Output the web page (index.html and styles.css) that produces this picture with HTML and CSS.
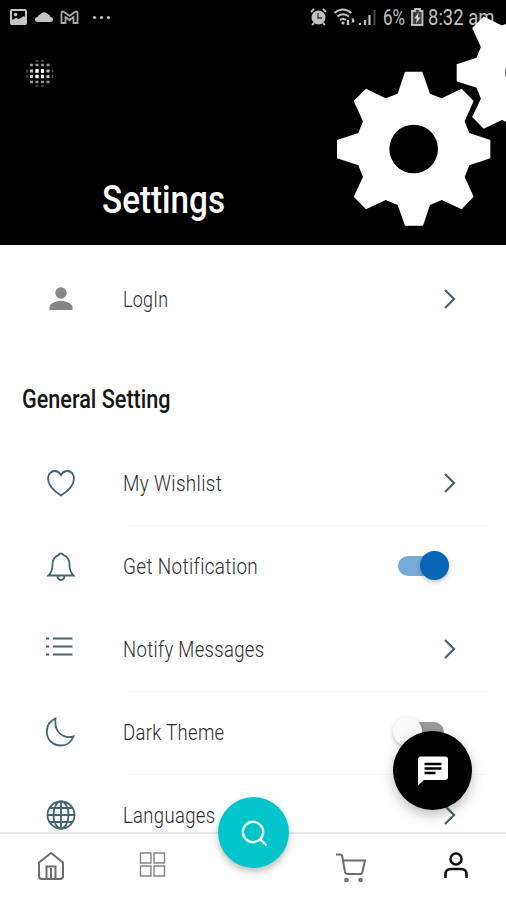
FILE: index.html
```html
<!DOCTYPE html>
<html lang="en">
<head>
<meta charset="utf-8">
<title>Settings</title>
<link rel="stylesheet" href="styles.css">
</head>
<body>
<div class="phone">
  <header class="header">
    <div class="status">
      <svg class="status-left" width="120" height="34" viewBox="0 0 120 34" fill="#c4c4c4">
        <path fill-rule="evenodd" d="M12 9h13a2 2 0 0 1 2 2v12a2 2 0 0 1-2 2H12a2 2 0 0 1-2-2V11a2 2 0 0 1 2-2zM12 11v9l4-2 3 1 5-3 1 1v-6z"/><circle cx="15.500" cy="14.500" r="1.800"/>
        <path d="M37.500 22a2.500 2.500 0 0 1 0-5q.5-2 2.500-2.500a5 5 0 0 1 8-.5 4 4 0 0 1 2.500 3 2.500 2.500 0 0 1 0 5z"/>
        <path d="M61.500 23V13.500q0-3 2.500-1.500l5.500 4 5.500-4q2.500-1.500 2.500 1.500V23h-4v-6l-4 3-4-3v6z" fill="none" stroke="#aaa" stroke-width="1.800"/>
        <circle cx="94.500" cy="17.500" r="1.600"/><circle cx="101.500" cy="17.500" r="1.600"/><circle cx="108.500" cy="17.500" r="1.600"/>
      </svg>
      <svg class="status-right" width="72" height="34" viewBox="0 0 72 34" fill="none" stroke="#c0c0c0">
        <circle cx="9.500" cy="17.500" r="7" fill="#c0c0c0" stroke="none"/><path d="M9 13v5h4" stroke="#333" stroke-width="1.300"/><path d="M2 12l3-3M14 9l3 3M5 23l-2 2M14 23l2 2" stroke-width="1.800"/>
        <path d="M25.500 13q8-7 17 0M28.500 16.500q5.500-4.500 11.500 0M31 20q3-2 6 0" stroke-width="1.900"/><circle cx="34" cy="23" r="1.600" fill="#c0c0c0" stroke="none"/><path d="M39 20v5M44 18.500v4" stroke-width="2.400"/>
        <path d="M51 25v-2M56 25v-5M60.500 25v-10" stroke-width="2.200"/><path d="M65.500 25V10" stroke="#444" stroke-width="2.200"/>
      </svg>
      <span class="clock percent">6%</span>
      <svg class="battery" width="14" height="34" viewBox="0 0 14 34"><path d="M4 9h5v2h2.500v14H1V11h3z" fill="#444" stroke="#c0c0c0" stroke-width="1.800"/><path d="M7.500 12.500L3.500 18.500h2.500l-1 5 4.500-6H7z" fill="#ddd"/></svg>
      <span class="clock time">8:32 am</span>
    </div>
    <svg class="dots" width="30" height="30" viewBox="0 0 30 30" fill="none" stroke-dasharray="3 2.500">
      <path d="M10.500 3h8.500M10.500 28h8.500" stroke="#555" stroke-width="1.500"/>
      <path d="M5 7h20M5 24h20" stroke="#999" stroke-width="2.600"/>
      <path d="M5 13h20M5 18.500h20" stroke="#c8c8c8" stroke-width="3"/>
      <path d="M10.500 13h8.500M10.500 18.500h8.500" stroke="#fff" stroke-width="3.600"/>
      <path d="M2 11.500v3M2 17v3M27.500 11.500v3M27.500 17v3" stroke="#555" stroke-width="1.500" stroke-dasharray="none"/>
    </svg>
    <h1 class="title"><span class="fit">Settings</span></h1>
    <svg class="gears" width="186" height="245" viewBox="0 -180 558 735" fill="#fff">
      <defs><path id="gear" fill-rule="evenodd" d="M255 35H307L330 101 365 115 425 86 461 123 434 184 448 219 511 240V295L448 316 434 351 461 410 425 448 365 420 330 435 309 497H255L233 435 197 420 138 448 101 410 129 351 115 316 51 295V240L115 219 129 184 101 123 138 86 197 115 233 101ZM208 267a73 73 0 1 0 146 0a73 73 0 1 0-146 0Z"/></defs>
      <use href="#gear"/>
      <use href="#gear" transform="translate(624 38) scale(.93) translate(-281 -267)"/>
    </svg>
  </header>

  <main class="content">
    <div class="row login">
      <svg class="icon" viewBox="0 0 30 30" fill="#858585"><circle cx="15" cy="9" r="5.700"/><path d="M3.500 26v-2.500c0-4 6-6.500 11.500-6.500s11.500 2.500 11.500 6.500V26z"/></svg>
      <span class="label"><span class="fit short">LogIn</span></span>
      <svg class="chev" viewBox="0 0 14 22"><path d="M2 2l9 9-9 9"/></svg>
    </div>
    <h2 class="section"><span class="fit">General Setting</span></h2>
    <div class="row line">
      <svg class="icon stroke" viewBox="0 0 30 30"><path d="M15 27.500C8 23 2 17.500 2 10.500 2 6 5 3 8.500 3 11.500 3 13.500 4.500 15 7c1.500-2.500 3.500-4 6.500-4C25 3 28 6 28 10.500 28 17.500 22 23 15 27.500z"/></svg>
      <span class="label"><span class="fit">My Wishlist</span></span>
      <svg class="chev" viewBox="0 0 14 22"><path d="M2 2l9 9-9 9"/></svg>
    </div>
    <div class="row">
      <svg class="icon stroke" viewBox="0 0 30 30"><path d="M2.500 24.500c3-3 4-5 4-10.500 0-5 2-8.500 6-9.800 1-2.300 4-2.300 5 0 4 1.300 6 4.800 6 9.800 0 5.500 1 7.500 4 10.500zM11.500 24.500c0 6 7 6 7 0"/></svg>
      <span class="label"><span class="fit">Get Notification</span></span>
      <span class="switch on"><span class="knob"></span></span>
    </div>
    <div class="row line">
      <svg class="icon stroke" viewBox="0 0 30 30"><path d="M7 4.500h19.500M7 12.500h19.500M7 20.500h19.500M0 4.500h3M0 12.500h3M0 20.500h3" stroke-width="2"/></svg>
      <span class="label"><span class="fit tight">Notify Messages</span></span>
      <svg class="chev" viewBox="0 0 14 22"><path d="M2 2l9 9-9 9"/></svg>
    </div>
    <div class="row line">
      <svg class="icon stroke" viewBox="0 0 30 30"><path d="M9.500 1.500C4 4 .8 9 .8 14.500c0 8 6 14 14 14 6 0 10.500-3.500 12.700-9C17 22 8 15.500 9.500 1.500z"/></svg>
      <span class="label"><span class="fit tight">Dark Theme</span></span>
      <span class="switch"><span class="knob"></span></span>
    </div>
    <div class="row">
      <svg class="icon stroke" viewBox="0 0 30 30"><circle cx="15" cy="15" r="13.500"/><ellipse cx="15" cy="15" rx="7.500" ry="13.500"/><path d="M15 1.500v27M1.500 15h27M3.500 8h23M3.500 22h23"/></svg>
      <span class="label"><span class="fit tight">Languages</span></span>
      <svg class="chev" viewBox="0 0 14 22"><path d="M2 2l9 9-9 9"/></svg>
    </div>
  </main>

  <button class="chat" aria-label="Chat"><svg width="30" height="30" viewBox="0 0 30 30"><path fill="#fff" d="M3 .500h24a3 3 0 0 1 3 3V21a3 3 0 0 1-3 3H6l-6 5.500V3.500a3 3 0 0 1 3-3z"/><path d="M6.500 8h17M6.500 12.500h17M6.500 17h11" stroke="#000" stroke-width="2.400"/></svg></button>

  <nav class="nav">
    <svg class="tab" viewBox="0 0 34 34"><path d="M5 13.500L17 4l12 9.500V27q0 3-3 3H8q-3 0-3-3zM12.500 30V17.500h9V30M17 19v11"/></svg>
    <svg class="tab grid" viewBox="0 0 34 34"><path d="M6.500 4H17v10H6.500zM20 4h10.500v10H20zM6.500 17H17v10H6.500zM20 17h10.500v10H20z"/></svg>
    <span class="gap"></span>
    <svg class="tab cart" viewBox="0 0 34 34"><path d="M2 5.500h4q2 0 2.300 2L11 23q.5 2 2.500 2H26q2 0 2.400-2L31 11.500H9"/><circle cx="12.500" cy="31" r="1.300"/><circle cx="26.500" cy="31" r="1.300"/></svg>
    <svg class="tab user" viewBox="0 0 34 34"><circle cx="17" cy="10" r="5.500"/><path d="M6.500 29v-3.500q0-5.500 5.500-5.500h10q5.500 0 5.500 5.500v3.500"/></svg>
  </nav>
  <button class="search" aria-label="Search"><svg width="30" height="30" viewBox="0 0 30 30"><circle cx="14" cy="14" r="10.200"/><path d="M21.500 21.500l6 6"/></svg></button>
</div>
</body>
</html>
```
FILE: styles.css
```css
* { box-sizing: border-box; margin: 0; padding: 0; }
body { background: #fff; font-family: Roboto, "Liberation Sans", sans-serif; }
.phone { position: relative; width: 506px; height: 900px; overflow: hidden; background: #fefefe; display: flex; flex-direction: column; }
.header { position: relative; flex: none; height: 245px; background: #000; display: flex; flex-direction: column; }
.status { display: flex; height: 34px; flex: none; color: #c0c0c0; }
.status-right { margin-left: 189px; flex: none; }
.status-left { flex: none; }
.battery { flex: none; }
.clock { font-size: 22px; line-height: 36px; white-space: nowrap; transform-origin: left; }
.percent { width: 28px; margin-left: 2px; transform: scaleX(.77); }
.time { width: 80px; margin-left: 3px; transform: scaleX(.84); }
.dots { margin: 24px 0 0 25px; }
.title { margin: 89px 0 0 102px; height: 46px; line-height: 46px; font-size: 38px; font-weight: 500; color: #fff; }
.fit { display: inline-block; transform-origin: left; white-space: nowrap; }
.title .fit { transform: scaleX(.875); }
.gears { position: absolute; right: 0; top: 0; }
.content { flex: 1; min-height: 0; overflow: hidden; display: flex; flex-direction: column; }
.row { flex: none; position: relative; height: 83px; display: flex; align-items: center; padding: 0 49px 0 46px; }
.row.login { height: 108px; }
.row.line::after { content: ""; position: absolute; left: 128px; right: 20px; bottom: -2px; height: 1px; background: #f5f5f5; }
.icon { width: 30px; height: 30px; flex: none; }
.stroke { fill: none; stroke: #446570; stroke-width: 1.8; }
.label { margin-left: 47px; flex: 1; padding-top: 2px; font-size: 22px; line-height: 30px; font-weight: 300; color: #2c2c2c; }
.label .fit { transform: scaleX(.86); letter-spacing: .4px; }
.label .tight { transform: scaleX(.84); }
.label .short { transform: scaleX(.81); }
.chev { width: 14px; height: 22px; fill: none; stroke: #48636b; stroke-width: 2.2; }
.section { flex: none; height: 88px; padding: 29px 0 0 22px; line-height: 36px; font-size: 25px; font-weight: 500; color: #161616; }
.section .fit { transform: scaleX(.865); }
.switch { width: 46px; height: 20px; margin-right: 13px; border-radius: 10px; background: #999; display: flex; align-items: center; }
.switch.on { background: #75aad8; justify-content: flex-end; }
.knob { width: 29px; height: 29px; flex: none; border-radius: 50%; background: #fafafa; box-shadow: 0 2px 4px rgba(0,0,0,.25); margin: 0 -5px; }
.on .knob { background: #0865b5; }
button { border: 0; border-radius: 50%; display: flex; align-items: center; justify-content: center; }
.chat { position: absolute; left: 393px; top: 731px; width: 79px; height: 79px; background: #000; box-shadow: 0 5px 12px rgba(0,0,0,.25); }
.nav { flex: none; height: 68px; border-top: 2px solid #e9e9e9; background: #fff; position: relative; display: flex; justify-content: space-between; padding: 15px 33px 0 34px; }
.tab { width: 34px; height: 34px; fill: none; stroke: #6d6d6d; stroke-width: 2; }
.tab.grid { stroke: #858585; stroke-width: 1.4; }
.gap { width: 34px; }
.tab.cart { margin-right: 5px; }
.tab.user { stroke: #111; stroke-width: 2.6; }
.search { position: absolute; left: 218px; top: 797px; width: 71px; height: 71px; background: #02c4cb; box-shadow: 0 4px 7px rgba(0,0,0,.25); }
.search svg { fill: none; stroke: #e9ffff; stroke-width: 2.4; }
```
